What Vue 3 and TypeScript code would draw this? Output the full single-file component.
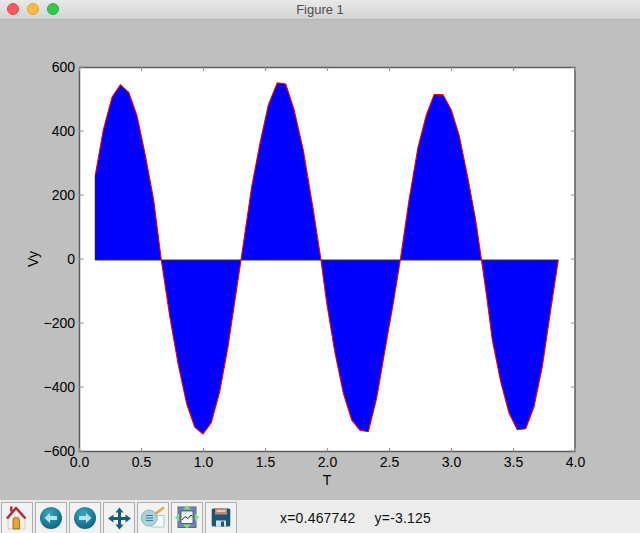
<script setup lang="ts">
const left = 79.5
const right = 575
const top = 67.5
const bottom = 451.5
const zeroY = 260

// traced from the plot, in window pixels
const curve: [number, number][] = [
  [95.3, 175], [103.3, 130], [112, 97.3], [120.3, 84.7], [128.7, 92.3], [137, 115.7], [145.3, 155], [153.7, 200],
  [161.3, 260], [170, 318], [178.3, 365], [186.7, 404], [194.7, 427], [203, 434], [211.3, 422.7], [219.7, 391.7],
  [228, 346.7], [235, 300], [241, 260], [251.7, 186.7], [260, 143], [268.3, 105], [277.3, 82.7], [285.7, 84],
  [294, 109.3], [303.3, 150], [313.3, 210], [321, 260], [326.7, 303], [335, 353], [343.3, 393], [351.7, 420],
  [360, 430.3], [368.3, 431.7], [376.7, 398], [385, 350], [393.3, 303], [400.3, 260], [409, 200], [418, 147.3],
  [426.3, 115], [434.3, 94.3], [443, 94.7], [451.3, 110], [459.3, 136], [467.7, 177], [475.7, 220], [481.5, 260],
  [486.7, 296.7], [492.3, 340], [500.7, 381.7], [509, 413], [517.3, 429.7], [525.7, 428.7], [534, 406.7],
  [542.3, 366.7], [550.7, 310], [558.3, 260]
]

const linePoints = curve.map(p => p.join(',')).join(' ')
const fillPoints = `95.3,${zeroY} ${linePoints}`

const xTicks = ['0.0', '0.5', '1.0', '1.5', '2.0', '2.5', '3.0', '3.5', '4.0'].map((label, i) => ({
  label,
  x: 79.5 + i * 62
}))
const yTicks = ['600', '400', '200', '0', '\u2212200', '\u2212400', '\u2212600'].map((label, i) => ({
  label,
  y: 67 + i * 64
}))
</script>

<template>
  <div class="window">
    <header class="titlebar">
      <div class="lights">
        <span class="light red"></span>
        <span class="light yellow"></span>
        <span class="light green"></span>
      </div>
      <span class="title">Figure 1</span>
    </header>

    <svg class="figure" width="640" height="470" viewBox="0 30 640 470">
      <rect :x="left" :y="top" :width="right - left" :height="bottom - top" fill="#fff" />
      <polygon :points="fillPoints" fill="#0000ff" />
      <line x1="95.3" :y1="zeroY" x2="558.3" :y2="zeroY" stroke="#333" stroke-width="1.2" />
      <line x1="95.3" y1="175" x2="95.3" :y2="zeroY" stroke="#111" stroke-width="1" />
      <polyline :points="linePoints" fill="none" stroke="#f00000" stroke-width="1.1" stroke-linejoin="round" />

      <rect :x="left" :y="top" :width="right - left" :height="bottom - top" fill="none" stroke="#5c5c5c" stroke-width="1.5" />

      <g stroke="#999" stroke-width="1.2">
        <template v-for="t in xTicks" :key="t.label">
          <line :x1="t.x" :y1="top" :x2="t.x" :y2="top + 3.5" />
          <line :x1="t.x" :y1="bottom - 3.5" :x2="t.x" :y2="bottom" />
        </template>
        <template v-for="t in yTicks" :key="t.label">
          <line :x1="left" :y1="t.y" :x2="left + 4" :y2="t.y" />
          <line :x1="right - 4" :y1="t.y" :x2="right" :y2="t.y" />
        </template>
      </g>

      <g class="tick-text">
        <text v-for="t in xTicks" :key="t.label" :x="t.x" y="467" text-anchor="middle">{{ t.label }}</text>
        <text v-for="t in yTicks" :key="t.label" x="75" :y="t.y + 5" text-anchor="end">{{ t.label }}</text>
        <text x="327" y="485" text-anchor="middle">T</text>
        <text x="38" y="259" text-anchor="middle" transform="rotate(-90 38 259)">Vy</text>
      </g>
    </svg>

    <footer class="toolbar">
      <div class="tools">
        <button class="tool">
          <svg width="30" height="30" viewBox="0 0 30 30">
            <path d="M6 14.500v11.500h17V14.500L14 5z" fill="#f6f0e6" stroke="#c4b6aa" stroke-width=".6" />
            <path d="M11 26V17.500a3.200 3.200 0 0 1 6.500 0V26z" fill="#eda32c" stroke="#8a5a1c" stroke-width=".8" />
            <rect x="8" y="3.500" width="2.500" height="5" fill="#a8303f" />
            <path d="M5 15.500 14 5l9.500 10.500" fill="none" stroke="#a8303f" stroke-width="2.600" stroke-linejoin="round" />
          </svg>
        </button>
        <button class="tool">
          <svg width="30" height="30" viewBox="0 0 30 30">
            <defs>
              <radialGradient id="ball" cx=".42" cy=".32" r=".75">
                <stop offset="0" stop-color="#3aa9c2" />
                <stop offset="1" stop-color="#0a5f7c" />
              </radialGradient>
            </defs>
            <circle cx="15" cy="15" r="11" fill="url(#ball)" />
            <path d="M8.500 15 14 10v3h7v4h-7v3z" fill="#b8e2ea" />
          </svg>
        </button>
        <button class="tool">
          <svg width="30" height="30" viewBox="0 0 30 30">
            <circle cx="15" cy="15" r="11" fill="url(#ball)" />
            <path d="M21.500 15 16 10v3H9v4h7v3z" fill="#b8e2ea" />
          </svg>
        </button>
        <button class="tool">
          <svg width="30" height="30" viewBox="0 0 30 30">
            <path d="M15.500 4.500l4 5h-2.500v4.500h4.500V11.500l5.500 4-5.500 4V17h-4.500v4.500h2.500l-4 5-4-5H14V17H9.500v2.500L4 15.500l5.500-4V14H14V9.500h-2.500z" fill="#165c7c" />
          </svg>
        </button>
        <button class="tool">
          <svg width="30" height="30" viewBox="0 0 30 30">
            <rect x="13.700" y="12.500" width="12.300" height="11.500" fill="#f6fbfc" stroke="#9cced6" />
            <path d="M15 12.500 26 4.500" stroke="#eea33e" stroke-width="2.600" />
            <circle cx="11.300" cy="15" r="8" fill="#a9d2da" stroke="#8cb9c4" />
            <path d="M8 12.500h7M8 15h7M8 17.500h7" stroke="#3f7f97" />
          </svg>
        </button>
        <button class="tool">
          <svg width="30" height="30" viewBox="0 0 30 30">
            <rect x="6" y="4" width="18" height="20.500" fill="#6a86c8" stroke="#666" />
            <rect x="9" y="8" width="12" height="12.500" fill="#f4f4f4" stroke="#333" stroke-width=".7" />
            <path d="M10 17l3-3.500 3 2 3-3.500 1.500 1.500" fill="none" stroke="#333" />
            <path d="M15 2.500l4 4h-8zM15 25.500l4-4h-8zM3 14.500l4-4v8zM27 14.500l-4-4v8z" fill="#7ae07a" />
          </svg>
        </button>
        <button class="tool">
          <svg width="30" height="30" viewBox="0 0 30 30">
            <path d="M5.700 7q0-1.500 1.500-1.500h15.600q1.500 0 1.500 1.500v15q0 1.500-1.500 1.500H7.200q-1.500 0-1.500-1.500z" fill="#1d5474" />
            <rect x="9" y="5.500" width="12" height="6" fill="#b98a78" />
            <rect x="10.500" y="7" width="9" height="2" fill="#e7c8b4" />
            <rect x="10" y="17.500" width="10" height="6" fill="#d6e1e6" />
            <rect x="15" y="18.500" width="3" height="5" fill="#1d5474" />
          </svg>
        </button>
      </div>
      <div class="status">
        <span>x=0.467742</span>
        <span>y=-3.125</span>
      </div>
    </footer>
  </div>
</template>

<style scoped>
.window {
  width: 640px;
  height: 533px;
  display: flex;
  flex-direction: column;
  background: #bfbfbf;
  font-family: "Liberation Sans", Arial, sans-serif;
  overflow: hidden;
}

.titlebar {
  height: 19px;
  flex: 0 0 19px;
  display: flex;
  align-items: center;
  justify-content: center;
  position: relative;
  background: linear-gradient(#e9e9e9, #d3d3d3);
  border-bottom: 1px solid #b3b3b3;
}

.lights {
  position: absolute;
  left: 7px;
  top: 3px;
  display: flex;
  gap: 8px;
}

.light {
  width: 12px;
  height: 12px;
  border-radius: 50%;
  box-sizing: border-box;
}

.red { background: #fc5b57; border: 1px solid #e5453f; }
.yellow { background: #fdbc40; border: 1px solid #e0a02f; }
.green { background: #34c84a; border: 1px solid #2bac3c; }

.title {
  font-size: 13px;
  color: #4f4f4f;
}

.figure {
  display: block;
  flex: 0 0 470px;
  margin-top: 10px;
}

.tick-text text {
  font-size: 14px;
  fill: #000;
  font-family: "Liberation Sans", Arial, sans-serif;
}

.toolbar {
  flex: 1;
  display: flex;
  align-items: flex-start;
  background: #ececec;
  min-height: 0;
}

.tools {
  display: flex;
  gap: 2px;
  padding: 2px 0 0 1px;
}

.tool {
  width: 32px;
  height: 31px;
  padding: 0;
  display: flex;
  align-items: center;
  justify-content: center;
  background: #f2f2f2;
  border: 1px solid #aeaeae;
  border-bottom: none;
  box-sizing: border-box;
}

.status {
  display: flex;
  gap: 19px;
  margin-left: 43px;
  margin-top: 10px;
  font-size: 14px;
  letter-spacing: 0.2px;
  color: #111;
}
</style>
